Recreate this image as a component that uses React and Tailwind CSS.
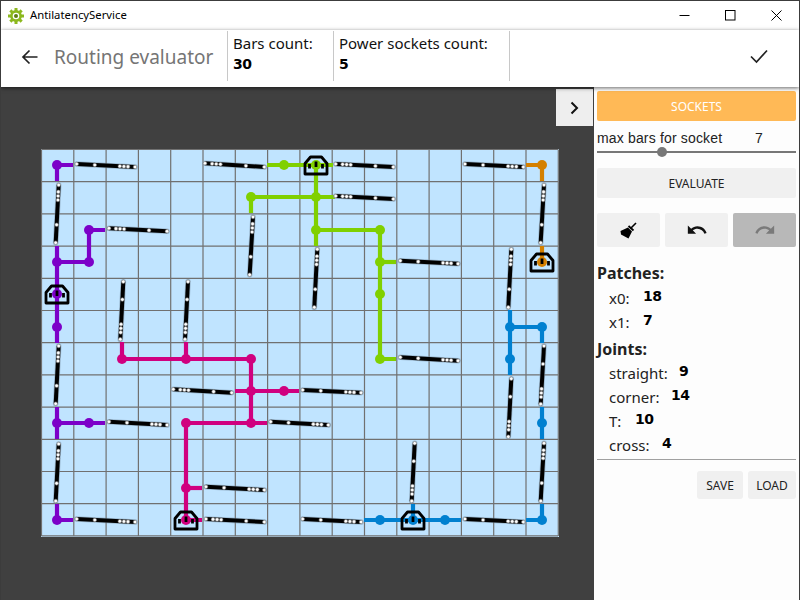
import React from "react";
import { MdUndo, MdRedo } from "react-icons/md";

const UI = "font-['Noto_Sans',sans-serif]";

const COLS = Array.from({ length: 17 }, (_, i) => 41.5 + i * 32.3);
const ROWS = Array.from({ length: 13 }, (_, i) => 149.5 + i * 32.2);

// p1 is the end next to the single dot, p2 the end next to the three dots
const BARS = [
  [76.7, 164, 135, 167],
  [264.3, 167, 205, 163.3],
  [55.7, 242.7, 58.7, 185],
  [167, 231.3, 109, 228.3],
  [249.7, 274.7, 253, 217],
  [123.3, 281.7, 120.3, 339.3],
  [188, 281.7, 185, 339.3],
  [393.3, 167, 335.7, 164],
  [465, 164, 523.3, 167],
  [393.3, 199, 335.7, 196],
  [540.7, 242.7, 544, 185],
  [314.3, 307.3, 317.3, 249.3],
  [400.3, 260.7, 458, 263.7],
  [508.3, 307.3, 511.3, 249.3],
  [55.7, 403.7, 58.7, 346],
  [231.7, 392.7, 173.3, 389.3],
  [109, 421.7, 167, 425],
  [270.7, 421.7, 328.3, 425],
  [55.7, 501, 58.7, 444],
  [206, 486.7, 264.3, 490],
  [76.7, 519, 135, 522],
  [264.3, 522, 206, 519],
  [302.7, 390, 361, 392.7],
  [400.3, 357.3, 458, 360.7],
  [544, 346, 540.7, 404],
  [511.3, 378.7, 508.3, 436.7],
  [540.7, 501, 544, 443.3],
  [414.7, 443.3, 411.7, 501],
  [302.7, 519, 361, 522],
  [465, 519, 523.3, 522],
];

const NETS = [
  {
    color: "#7c00c8",
    lines: [
      "M57 181V165H73",
      "M57 246V343",
      "M57 262H89V230H105",
      "M57 407V439",
      "M57 423H105",
      "M57 504V520H73",
    ],
    nodes: [[57, 165], [57, 262], [89, 262], [89, 230], [57, 327], [57, 423], [89, 423], [57, 520], [57, 294]],
  },
  {
    color: "#80d000",
    lines: [
      "M267 165H333",
      "M316 165V246",
      "M251 213V197H335",
      "M316 230H380V359H396",
      "M380 262H396",
    ],
    nodes: [[284, 165], [251, 197], [316, 197], [316, 230], [380, 230], [380, 262], [380, 294], [380, 359], [316, 165]],
  },
  {
    color: "#d48000",
    lines: ["M526 165H542V181", "M542 246V262"],
    nodes: [[542, 165], [542, 262]],
  },
  {
    color: "#d0007f",
    lines: [
      "M122 342V359H251V423",
      "M186 342V359",
      "M235 391H299",
      "M267 423H186V520H202",
      "M186 488H202",
    ],
    nodes: [[122, 359], [186, 359], [251, 359], [251, 391], [284, 391], [251, 423], [186, 423], [186, 488], [186, 520]],
  },
  {
    color: "#0080d0",
    lines: [
      "M510 310V375",
      "M510 327H542V343",
      "M542 407V439",
      "M542 504V520H526",
      "M364 520H461",
      "M413 504V520",
    ],
    nodes: [[510, 327], [542, 327], [510, 359], [542, 423], [542, 520], [380, 520], [413, 520], [445, 520]],
  },
];

const SOCKETS = [[57, 294], [316, 165], [542, 262], [186, 520], [413, 520]];

const Bar = ({ bar }) => {
  const [x1, y1, x2, y2] = bar;
  const at = (t) => [x1 + (x2 - x1) * t, y1 + (y2 - y1) * t];
  return (
    <g>
      <line x1={x1} y1={y1} x2={x2} y2={y2} stroke="#7f98ad" strokeWidth="5.6" strokeLinecap="round" opacity="0.55" />
      <line x1={x1} y1={y1} x2={x2} y2={y2} stroke="#000" strokeWidth="4" />
      {[0, 0.31, 0.74, 0.81, 0.88, 1].map((t) => {
        const [cx, cy] = at(t);
        return <circle key={t} cx={cx} cy={cy} r="1.8" fill="#fff" stroke="#777" strokeWidth="0.6" />;
      })}
    </g>
  );
};

const Socket = ({ x, y }) => (
  <g transform={`translate(${x} ${y})`} stroke="#000" fill="none">
    <path d="M-11 9V-1.5L-5.5 -8H5.5L11 -1.5V9Z" strokeWidth="2.8" strokeLinejoin="round" />
    <path d="M0 -3.5V2M-6.5 -1V3.5M6.5 -1V3.5" strokeWidth="2.8" />
  </g>
);

const RouteMap = () => (
  <svg width="518" height="388" viewBox="41 149 518 388" className="block">
    <rect x="41" y="149" width="518" height="388" fill="#c0e4ff" />
    <g stroke="#707070" strokeWidth="1.2">
      {COLS.map((x) => (
        <line key={x} x1={x} y1="149.5" x2={x} y2="536" />
      ))}
      {ROWS.map((y) => (
        <line key={y} x1="41.5" y1={y} x2="558" y2={y} />
      ))}
    </g>
    {NETS.map((net) => (
      <g key={net.color}>
        {net.lines.map((d) => (
          <path key={d} d={d} fill="none" stroke={net.color} strokeWidth="4.2" />
        ))}
        {net.nodes.map(([x, y]) => (
          <circle key={`${x}-${y}`} cx={x} cy={y} r="5" fill={net.color} />
        ))}
      </g>
    ))}
    {BARS.map((bar) => (
      <Bar key={bar.join()} bar={bar} />
    ))}
    {SOCKETS.map(([x, y]) => (
      <Socket key={`${x}-${y}`} x={x} y={y} />
    ))}
  </svg>
);

const Gear = () => (
  <svg width="16" height="16" viewBox="-8 -8 16 16">
    <g fill="#8cb81e">
      {[0, 45, 90, 135, 180, 225, 270, 315].map((a) => (
        <rect key={a} x="-1.5" y="-8" width="3" height="3" transform={`rotate(${a})`} />
      ))}
    </g>
    <circle r="4.6" fill="none" stroke="#8cb81e" strokeWidth="2.6" />
    <circle r="2" fill="#5e7d10" />
  </svg>
);

const Broom = () => (
  <svg width="17" height="17" viewBox="0 0 17 17">
    <path d="M10.5 6.5L16 1" stroke="#000" strokeWidth="1.6" />
    <path d="M8.5 4L13.5 8.5" stroke="#000" strokeWidth="1.8" />
    <path d="M8 5.5L12 9.5L8.5 16.5L1 12.5L0.5 9Z" fill="#000" />
  </svg>
);

const Num = ({ children, className }) => (
  <span className={`font-['DejaVu_Sans',sans-serif] font-bold text-[14px] tracking-[-0.6px] text-black ${className}`}>
    {children}
  </span>
);

const InfoBlock = ({ label, value, className }) => (
  <div className={`h-[50px] border-r border-[#c8c8c8] pl-[5px] ${className}`}>
    <p className="text-[15px] leading-[22px] text-[#111] mt-[1px]">{label}</p>
    <Num className="block leading-[18px] mt-[1px]">{value}</Num>
  </div>
);

const Stat = ({ label, value, gap }) => (
  <div className="flex h-[24px] pl-[12px]">
    <span className={`text-[15px] leading-[24px] text-[#222] ${gap}`}>{label}</span>
    <Num className="leading-[20px]">{value}</Num>
  </div>
);

export default function App() {
  return (
    <div className={`w-[800px] h-[600px] flex flex-col overflow-hidden bg-white border-t border-x border-[#3c3c3c] ${UI}`}>
      <div className="h-[29px] flex items-center shrink-0 pl-[7px] bg-white">
        <Gear />
        <span className="ml-[6px] text-[11.3px] text-black">AntilatencyService</span>
        <div className="ml-auto flex items-center h-full">
          <div className="w-[46px] flex justify-center">
            <svg width="11" height="11" viewBox="0 0 11 11"><path d="M0.5 5.5H10.5" stroke="#000" /></svg>
          </div>
          <div className="w-[46px] flex justify-center">
            <svg width="11" height="11" viewBox="0 0 11 11"><rect x="0.5" y="0.5" width="9.5" height="9.5" fill="none" stroke="#000" /></svg>
          </div>
          <div className="w-[46px] flex justify-center">
            <svg width="11" height="11" viewBox="0 0 11 11"><path d="M0.5 0.5L10.5 10.5M10.5 0.5L0.5 10.5" stroke="#000" /></svg>
          </div>
        </div>
      </div>

      <header className="relative z-10 h-[57px] shrink-0 flex items-start bg-white shadow-[0_1px_4px_rgba(0,0,0,0.6)]">
        <div className="w-[227px] h-[50px] flex items-center pl-[20px] mt-[1px] border-r border-[#c8c8c8]">
          <svg width="18" height="18" viewBox="0 0 18 18" className="mt-[2px]">
            <path d="M16.5 9H2M8.5 2.5L2 9L8.5 15.5" fill="none" stroke="#222" strokeWidth="1.7" />
          </svg>
          <span className="ml-[15px] mt-[2px] text-[19px] leading-[28px] text-[#757575] whitespace-nowrap">Routing evaluator</span>
        </div>
        <InfoBlock label="Bars count:" value="30" className="w-[106px] mt-[1px]" />
        <InfoBlock label="Power sockets count:" value="5" className="w-[176px] mt-[1px]" />
        <div className="ml-auto mr-[30px] mt-[16px]">
          <svg width="20" height="20" viewBox="0 0 20 20">
            <path d="M2 10.5L7.5 16L18 4.5" fill="none" stroke="#222" strokeWidth="1.7" />
          </svg>
        </div>
      </header>

      <main className="flex-1 flex min-h-0">
        <div className="relative w-[593px] bg-[#404040] pl-[40px] pt-[62px]">
          <RouteMap />
          <button className="absolute right-[1px] top-[2px] w-[37px] h-[37px] bg-[#eeeeee] flex items-center justify-center pr-[2px]">
            <svg width="12" height="14" viewBox="0 0 12 14">
              <path d="M3.5 1.5L9 7L3.5 12.5" fill="none" stroke="#111" strokeWidth="2" />
            </svg>
          </button>
        </div>

        <aside className="flex-1 bg-[#fdfdfd] px-[3px] pt-[4px] flex flex-col">
          <button className="h-[30px] rounded-[2px] bg-[#ffb956] text-white text-[12px] pt-[1px]">SOCKETS</button>
          <div className="mt-[8px] flex font-['Liberation_Sans',sans-serif] text-[14px] tracking-[0.16px] leading-[18px] text-[#222]">
            <span className="w-[158px]">max bars for socket</span>
            <span>7</span>
          </div>
          <div className="relative h-[2px] mt-[4px] bg-[#777]">
            <span className="absolute left-[60px] top-[-4px] w-[10px] h-[10px] rounded-full bg-[#777]" />
          </div>
          <button className="mt-[15px] h-[30px] rounded-[2px] bg-[#f0f0f0] text-[12px] text-[#222] pt-[1px]">EVALUATE</button>
          <div className="mt-[15px] flex gap-[5px]">
            <button className="w-[63px] h-[34px] rounded-[2px] bg-[#f0f0f0] flex items-center justify-center">
              <Broom />
            </button>
            <button className="w-[63px] h-[34px] rounded-[2px] bg-[#f0f0f0] flex items-center justify-center">
              <MdUndo size={22} color="#111" />
            </button>
            <button className="w-[63px] h-[34px] rounded-[2px] bg-[#b8b8b8] flex items-center justify-center">
              <MdRedo size={22} color="#7a7a7a" />
            </button>
          </div>
          <p className="mt-[15px] text-[16px] leading-[22px] font-bold text-[#222]">Patches:</p>
          <div className="mt-[2px]">
            <Stat label="x0:" value="18" gap="w-[34px]" />
            <Stat label="x1:" value="7" gap="w-[34px]" />
          </div>
          <p className="mt-[4px] text-[16px] leading-[22px] font-bold text-[#222]">Joints:</p>
          <div className="mt-[1px]">
            <Stat label="straight:" value="9" gap="w-[70px]" />
            <Stat label="corner:" value="14" gap="w-[62px]" />
            <Stat label="T:" value="10" gap="w-[26px]" />
            <Stat label="cross:" value="4" gap="w-[53px]" />
          </div>
          <div className="mt-[2px] h-px bg-[#a0a0a0]" />
          <div className="mt-[11px] flex justify-end gap-[5px]">
            <button className="w-[46px] h-[28px] rounded-[3px] bg-[#f0f0f0] text-[12px] text-[#222] pt-[1px]">SAVE</button>
            <button className="w-[48px] h-[28px] rounded-[3px] bg-[#f0f0f0] text-[12px] text-[#222] pt-[1px]">LOAD</button>
          </div>
        </aside>
      </main>
    </div>
  );
}
